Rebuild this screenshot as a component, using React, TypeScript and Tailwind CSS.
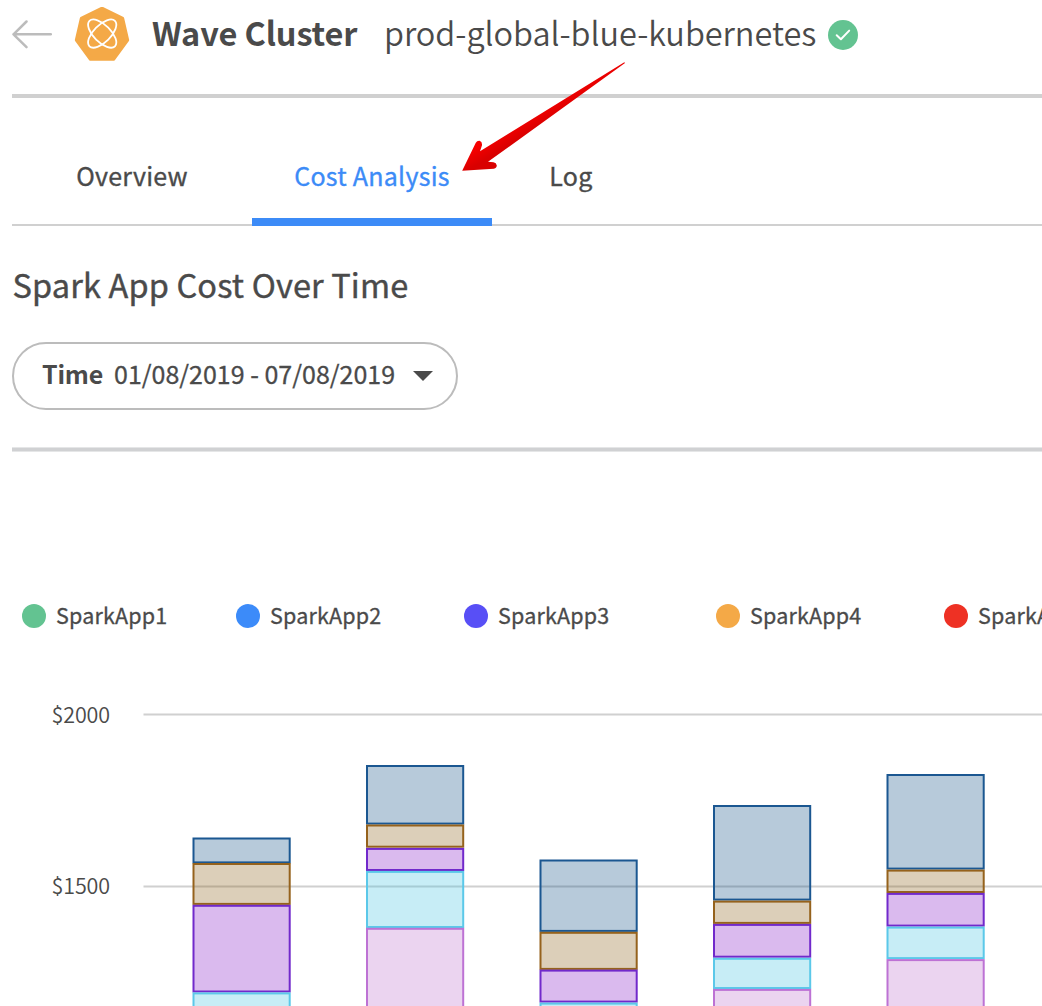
import React from "react";

const legend = [
  { label: "SparkApp1", dot: "bg-[#63c391]", width: "w-[214px]" },
  { label: "SparkApp2", dot: "bg-[#3c8bf9]", width: "w-[228px]" },
  { label: "SparkApp3", dot: "bg-[#584ff6]", width: "w-[252px]" },
  { label: "SparkApp4", dot: "bg-[#f4a947]", width: "w-[228px]" },
  { label: "SparkApp5", dot: "bg-[#ee3124]", width: "w-[228px]" },
];

const series = [
  { fill: "#124e84", stroke: "#1b5791" },
  { fill: "#8a5f16", stroke: "#95621c" },
  { fill: "#8419c6", stroke: "#7129cb" },
  { fill: "#44c3e1", stroke: "#5bc8e9" },
  { fill: "#bc70cd", stroke: "#bd72d4" },
];

/* Each bar lists the [top, bottom] of its segments, from the uppermost series down. */
const bars = [
  { x: 193.5, parts: [[838.5, 862.4], [864, 903.9], [905.8, 991.5], [993.4, 1040]] },
  { x: 367, parts: [[766, 823.6], [825.5, 846.7], [848.9, 870], [871.9, 927], [928.8, 1040]] },
  { x: 540.5, parts: [[860.5, 930.9], [932.8, 968.9], [970.6, 1001.6], [1003.6, 1040]] },
  { x: 714, parts: [[806, 899.6], [901.6, 922.9], [924.9, 956.7], [958.8, 988], [989.9, 1040]] },
  { x: 887.5, parts: [[775, 868.6], [870.6, 892], [893.9, 925.6], [927.6, 958.1], [960.1, 1040]] },
];

function Logo() {
  return (
    <svg className="ml-[22px] h-14 w-14 shrink-0" viewBox="-28 -27 56 56">
      <path
        d="M0-25 L20-15.3 L24.9 6 L11.2 24.6 H-11.2 L-24.9 6 L-20-15.3Z"
        fill="#f4a947"
        stroke="#f4a947"
        strokeWidth="4.5"
        strokeLinejoin="round"
      />
      <g fill="none" stroke="#fff" strokeWidth="1.8">
        <ellipse rx="18" ry="8.6" transform="translate(.2 -.4) rotate(45)" />
        <ellipse rx="18" ry="8.6" transform="translate(.2 -.4) rotate(-45)" />
      </g>
    </svg>
  );
}

function Header() {
  return (
    <header className="ml-3 flex h-[98px] items-start border-b-4 border-[#d0d0d0]">
      <div className="flex h-[69px] items-center">
        <svg className="h-[30px] w-10 shrink-0" viewBox="0 0 40 30" fill="none" stroke="#bcbcbc" strokeWidth="2.5" strokeLinecap="round" strokeLinejoin="round">
          <path d="M38.8 14.3H1.5M14.5 1.5L1.5 14.3L14.5 27.1" />
        </svg>
        <Logo />
        <h1 className="mb-[5px] ml-[22px] w-[232px] text-[32.5px] font-bold leading-[48px] tracking-[-0.13px]">Wave Cluster</h1>
        <span className="mb-[5px] w-[444px] text-[32.5px] font-[350] leading-[48px] tracking-[-0.05px]">prod-global-blue-kubernetes</span>
        <svg className="h-[30px] w-[30px] shrink-0" viewBox="0 0 30 30">
          <circle cx="15" cy="15" r="15" fill="#63c391" />
          <path d="M8.7 15.3L12.9 19.3L21.2 10.6" fill="none" stroke="#fff" strokeWidth="2" strokeLinecap="round" strokeLinejoin="round" />
        </svg>
      </div>
    </header>
  );
}

function Tabs() {
  return (
    <nav className="ml-3 flex h-32 items-end border-b-2 border-[#d0d0d0] text-[25px] leading-[36px] tracking-[0.25px] [-webkit-text-stroke:0.35px]">
      <div className="-mb-0.5 flex h-[100px] w-60 justify-center pt-[31px]">Overview</div>
      <div className="-mb-0.5 flex h-[100px] w-60 justify-center border-b-8 border-[#3c8bf7] pt-[31px] text-[#3c8bf7]">Cost Analysis</div>
      <div className="-mb-0.5 flex h-[100px] w-[158px] justify-center pt-[31px]">Log</div>
    </nav>
  );
}

function PointerArrow() {
  return (
    <svg className="pointer-events-none absolute left-[456px] top-[56px] h-[120px] w-[176px]" viewBox="456 56 176 120">
      <defs>
        <linearGradient id="pointer" x1="545" y1="105" x2="553" y2="118" gradientUnits="userSpaceOnUse">
          <stop offset="0" stopColor="#f60000" />
          <stop offset="1" stopColor="#d90000" />
        </linearGradient>
      </defs>
      <path
        d="M624.3 62.2L480 151.2L482 145.2Q482.4 141.8 479.5 140.8Q477 140.6 475.8 142.8L462.2 170.8L493.8 168.8Q496.8 168 496.8 165.6Q496.4 162.8 493.5 162.3L488 161.8L625 63Z"
        fill="url(#pointer)"
      />
    </svg>
  );
}

function Chart() {
  return (
    <div className="mt-14 flex h-[316px]">
      <div className="flex w-[110px] flex-col gap-[135px] pt-[6px] text-right text-[21.5px] font-[350] leading-9 tracking-[-0.1px]">
        <span>$2000</span>
        <span>$1500</span>
      </div>
      <svg className="h-[316px] w-[932px] shrink-0" viewBox="110 690 932 316">
        <g stroke="#d0d0d0" strokeWidth="2">
          <path d="M143.5 714.6H1042M143.5 886.5H1042" />
        </g>
        {bars.map((bar) =>
          bar.parts.map(([top, bottom], i) => (
            <rect
              key={`${bar.x}-${i}`}
              x={bar.x}
              y={top}
              width="96.2"
              height={bottom - top}
              fill={series[i].fill}
              fillOpacity="0.3"
              stroke={series[i].stroke}
              strokeWidth="2"
            />
          ))
        )}
      </svg>
    </div>
  );
}

export default function App() {
  return (
    <div className="relative h-[1006px] w-[1042px] overflow-hidden bg-white font-['Noto_Sans_CJK_JP',sans-serif] text-[#4a4a4a]">
      <Header />
      <Tabs />
      <section>
        <h2 className="ml-[12.5px] mt-[34px] text-[32.5px] leading-[48px] tracking-[0.15px] [-webkit-text-stroke:0.4px]">Spark App Cost Over Time</h2>
        <button className="ml-3 mt-[34px] flex h-[68px] w-[446px] items-center rounded-full border-2 border-[#bcbcbc] pl-[28px] text-[25px] leading-9">
          <span className="mb-[7px] w-[72px] text-left font-bold tracking-[-0.2px]">Time</span>
          <span className="mb-[7px] w-[299px] text-left [-webkit-text-stroke:0.3px]">01/08/2019 - 07/08/2019</span>
          <svg className="h-2.5 w-5 shrink-0" viewBox="0 0 20 10">
            <path d="M0 0H20L10 10Z" fill="#4a4a4a" />
          </svg>
        </button>
        <div className="ml-3 mt-[37px] h-[5px] border-y border-[#e5e6e7] bg-[#d0d1d3]" />
      </section>
      <ul className="mt-[146px] flex h-9 pl-[22px] text-[21.5px] leading-9 tracking-[0.18px] [-webkit-text-stroke:0.3px]">
        {legend.map((item) => (
          <li key={item.label} className={`flex shrink-0 items-center ${item.width}`}>
            <span className={`mr-2.5 h-6 w-6 rounded-full ${item.dot}`} />
            <span className="mb-0.5">{item.label}</span>
          </li>
        ))}
      </ul>
      <Chart />
      <PointerArrow />
    </div>
  );
}
